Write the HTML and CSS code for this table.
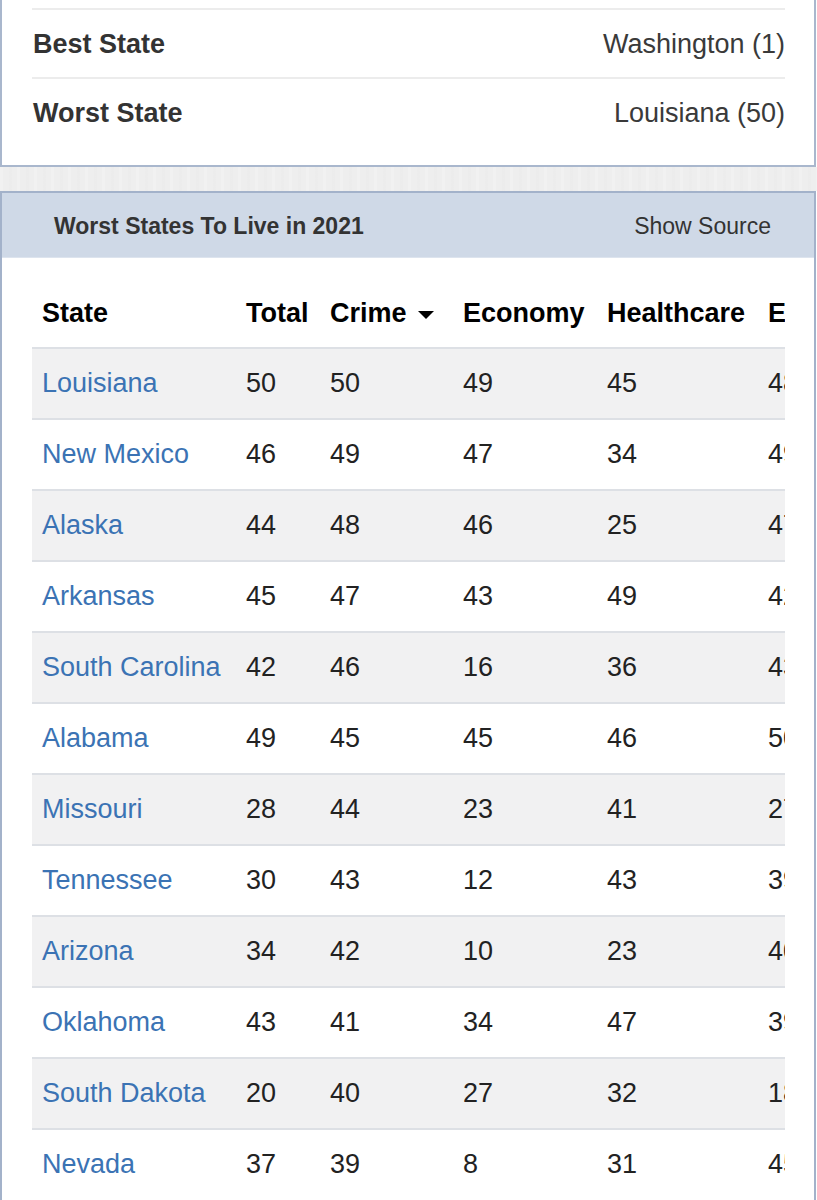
FILE: index.html
```html
<!DOCTYPE html>
<html lang="en">
<head>
<meta charset="utf-8">
<title>Worst States To Live in 2021</title>
<link rel="stylesheet" href="styles.css">
</head>
<body>
<section class="card summary">
  <div class="summary-row"><span class="label">Best State</span><span class="value">Washington (1)</span></div>
  <div class="summary-row"><span class="label">Worst State</span><span class="value">Louisiana (50)</span></div>
</section>
<div class="gap"></div>
<section class="card ranking">
  <header class="card-head">
    <h2 class="card-title">Worst States To Live in 2021</h2>
    <span class="source">Show Source</span>
  </header>
  <div class="table-wrap">
    <table class="rank-table">
      <colgroup>
        <col class="c-state"><col class="c-total"><col class="c-crime"><col class="c-econ"><col class="c-health"><col class="c-edu">
      </colgroup>
      <thead>
        <tr><th>State</th><th>Total</th><th>Crime <span class="caret"></span></th><th>Economy</th><th>Healthcare</th><th>Education</th></tr>
      </thead>
      <tbody>
        <tr><td><a href="#">Louisiana</a></td><td>50</td><td>50</td><td>49</td><td>45</td><td>48</td></tr>
        <tr><td><a href="#">New Mexico</a></td><td>46</td><td>49</td><td>47</td><td>34</td><td>49</td></tr>
        <tr><td><a href="#">Alaska</a></td><td>44</td><td>48</td><td>46</td><td>25</td><td>47</td></tr>
        <tr><td><a href="#">Arkansas</a></td><td>45</td><td>47</td><td>43</td><td>49</td><td>42</td></tr>
        <tr><td><a href="#">South Carolina</a></td><td>42</td><td>46</td><td>16</td><td>36</td><td>43</td></tr>
        <tr><td><a href="#">Alabama</a></td><td>49</td><td>45</td><td>45</td><td>46</td><td>50</td></tr>
        <tr><td><a href="#">Missouri</a></td><td>28</td><td>44</td><td>23</td><td>41</td><td>27</td></tr>
        <tr><td><a href="#">Tennessee</a></td><td>30</td><td>43</td><td>12</td><td>43</td><td>39</td></tr>
        <tr><td><a href="#">Arizona</a></td><td>34</td><td>42</td><td>10</td><td>23</td><td>40</td></tr>
        <tr><td><a href="#">Oklahoma</a></td><td>43</td><td>41</td><td>34</td><td>47</td><td>39</td></tr>
        <tr><td><a href="#">South Dakota</a></td><td>20</td><td>40</td><td>27</td><td>32</td><td>18</td></tr>
        <tr><td><a href="#">Nevada</a></td><td>37</td><td>39</td><td>8</td><td>31</td><td>45</td></tr>
      </tbody>
    </table>
  </div>
</section>
</body>
</html>
```

FILE: styles.css
```css
html, body {
  margin: 0;
  padding: 0;
  background: #ffffff;
}
body {
  font-family: "Liberation Sans", Arial, Helvetica, sans-serif;
  width: 817px;
  height: 1200px;
  overflow: hidden;
}
.card {
  box-sizing: border-box;
  width: 816px;
  background: #ffffff;
  border: 2px solid #a9b7cd;
}
.summary {
  border-top: none;
  padding: 8px 29px 19px 30px;
}
.summary-row {
  display: flex;
  justify-content: space-between;
  align-items: center;
  border-top: 2px solid #ececec;
  padding: 1px 0 0 1px;
  height: 66px;
  font-size: 27px;
  line-height: 31px;
  color: #333333;
}
.summary-row .label {
  font-weight: bold;
}
.summary-row .value {
  color: #3a3a3a;
}
.gap {
  height: 24px;
  background-color: #eeeeee;
  background-image: repeating-linear-gradient(90deg, rgba(255,255,255,0.18) 0 3px, rgba(0,0,0,0) 3px 9px, rgba(0,0,0,0.008) 9px 12px, rgba(0,0,0,0) 12px 17px);
}
.ranking {
  border-color: #a3b2ca;
  border-bottom: none;
  height: 1020px;
}
.card-head {
  display: flex;
  justify-content: space-between;
  align-items: center;
  height: 62px;
  padding: 2px 43px 0 52px;
  background: #cfd9e7;
  border-bottom: 1px solid #dde4ee;
}
.card-title {
  margin: 0;
  font-size: 23px;
  font-weight: bold;
  color: #333333;
}
.source {
  font-size: 23px;
  color: #333333;
}
.table-wrap {
  margin: 0 29px 0 30px;
  padding-top: 20px;
  overflow: hidden;
}
.rank-table {
  border-collapse: collapse;
  table-layout: fixed;
  width: 900px;
  font-size: 27px;
  line-height: 31px;
}
.c-state { width: 204px; }
.c-total { width: 84px; }
.c-crime { width: 133px; }
.c-econ { width: 144px; }
.c-health { width: 161px; }
.c-edu { width: 174px; }
.rank-table th {
  text-align: left;
  font-weight: bold;
  color: #000000;
  padding: 20px 10px 18px;
  white-space: nowrap;
}
.caret {
  display: inline-block;
  width: 0;
  height: 0;
  border-left: 8px solid transparent;
  border-right: 8px solid transparent;
  border-top: 8px solid #000000;
  vertical-align: middle;
  margin-left: 4px;
}
.rank-table td {
  padding: 19px 10px 19px;
  border-top: 2px solid #dde0e5;
  color: #222222;
  white-space: nowrap;
}
.rank-table tbody tr:nth-child(odd) td {
  background: #f1f1f2;
}
.rank-table a {
  color: #3b73b4;
  text-decoration: none;
}
```
